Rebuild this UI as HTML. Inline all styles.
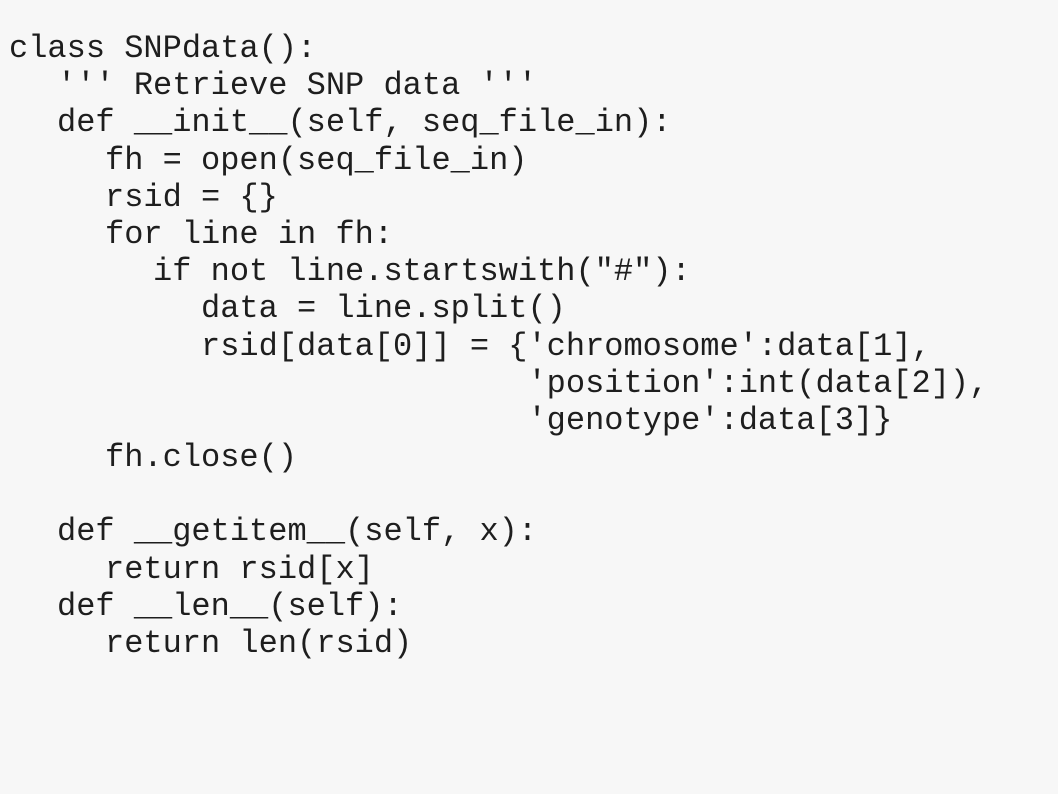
<!DOCTYPE html>
<html><head><meta charset="utf-8"><style>
html,body{margin:0;padding:0;background:#f7f7f7;width:1058px;height:794px;overflow:hidden}
.c{position:absolute;left:9px;top:30px;font-family:"Liberation Mono",monospace;font-size:32px;line-height:37.2px;color:#1e1e1e}
.c div{height:37.2px;white-space:pre}
.l1{padding-left:48px}.l2{padding-left:96px}.l3{padding-left:144px}.l4{padding-left:192px}
</style></head><body><div class="c"><div>class SNPdata():</div><div class="l1">''' Retrieve SNP data '''</div><div class="l1">def __init__(self, seq_file_in):</div><div class="l2">fh = open(seq_file_in)</div><div class="l2">rsid = {}</div><div class="l2">for line in fh:</div><div class="l3">if not line.startswith("#"):</div><div class="l4">data = line.split()</div><div class="l4">rsid[data[0]] = {'chromosome':data[1],</div><div class="l4">                 'position':int(data[2]),</div><div class="l4">                 'genotype':data[3]}</div><div class="l2">fh.close()</div><div></div><div class="l1">def __getitem__(self, x):</div><div class="l2">return rsid[x]</div><div class="l1">def __len__(self):</div><div class="l2">return len(rsid)</div></div></body></html>
